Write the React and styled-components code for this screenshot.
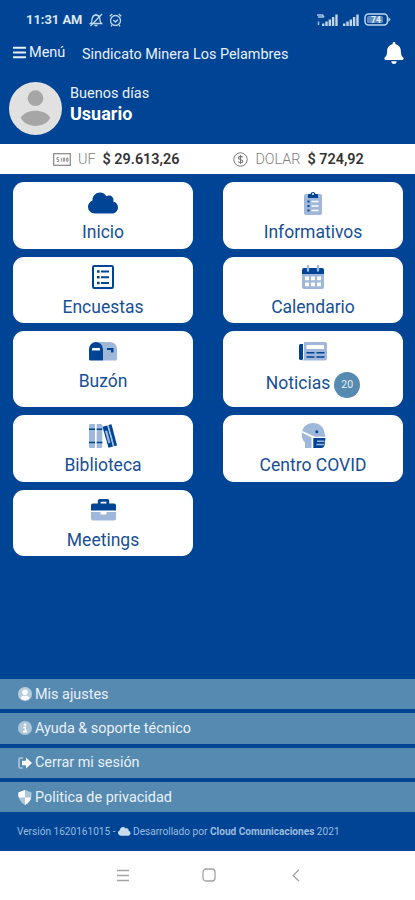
import React from "react";
import styled, { createGlobalStyle } from "styled-components";
import { FaBars, FaBell, FaCloud } from "react-icons/fa";

const blue = "#004495";
const steel = "#568ab1";
const soft = "#9fb7d9";

const GlobalStyle = createGlobalStyle`
  * {
    box-sizing: border-box;
  }
  body {
    margin: 0;
    background: ${blue};
    font-family: Roboto, sans-serif;
  }
`;

const ClipboardIcon = () => (
  <svg width="18" height="24" viewBox="0 0 18 24">
    <rect y="3" width="18" height="21" rx="2" fill={soft} />
    <path d="M4 3h2.4a2.7 2.7 0 0 1 5.2 0H14v4H4z" fill={blue} />
    <circle cx="9" cy="3" r="1" fill="#fff" />
    <path d="M7.5 10.5h7M7.5 15h7M7.5 19.5h7" stroke="#fff" strokeWidth="1.6" />
    <path d="M3.5 10.5h2M3.5 15h2M3.5 19.5h2" stroke={blue} strokeWidth="2" />
  </svg>
);

const ListIcon = () => (
  <svg width="22" height="24" viewBox="0 0 22 24">
    <rect x="1" y="1" width="20" height="22" rx="1.2" fill="none" stroke={blue} strokeWidth="2" />
    <path d="M5 6.5h2.6M5 12.3h2.6M5 18h2.6" stroke={blue} strokeWidth="2.6" />
    <path d="M9 6.5h8M9 12.3h8M9 18h8" stroke={blue} strokeWidth="1.9" />
  </svg>
);

const CalendarIcon = () => (
  <svg width="22" height="24" viewBox="0 0 22 24">
    <path d="M0 9h22v13a2 2 0 0 1-2 2H2a2 2 0 0 1-2-2z" fill={soft} />
    <path d="M0 9V5a2 2 0 0 1 2-2h18a2 2 0 0 1 2 2v4z" fill={blue} />
    <path d="M6 1v4.5M16 1v4.5" stroke={soft} strokeWidth="2.4" strokeLinecap="round" />
    <path
      d="M3 11.5h4v3.7H3zM9 11.5h4v3.7H9zM15 11.5h4v3.7h-4zM3 17.5h4v3.7H3zM9 17.5h4v3.7H9zM15 17.5h4v3.7h-4z"
      fill="#fff"
    />
  </svg>
);

const MailboxIcon = () => (
  <svg width="28" height="19" viewBox="0 0 28 19">
    <path d="M7 0h14a7 7 0 0 1 7 7v10a1.5 1.5 0 0 1-1.5 1.5H14V7a7 7 0 0 0-7-7z" fill={soft} />
    <path d="M0 7a7 7 0 0 1 14 0v11.5H1.5A1.5 1.5 0 0 1 0 17z" fill={blue} />
    <rect x="3" y="6" width="8" height="2.6" rx="0.5" fill="#fff" />
    <path d="M18 6h6.5v4.5H22V8h-4z" fill={blue} />
  </svg>
);

const NewsIcon = () => (
  <svg width="28" height="19" viewBox="0 0 28 19">
    <path d="M5 0h21.5A1.5 1.5 0 0 1 28 1.5v15a2 2 0 0 1-2 2H3.5Q5 17.500 5 16z" fill={soft} />
    <path d="M4 2H1.500A1.500 1.500 0 0 0 0 3.500v12.800a2 2 0 0 0 4 0z" fill={blue} />
    <rect x="7.500" y="3" width="17.500" height="4" fill="#fff" />
    <path d="M7.500 10.800h8M17.500 10.800h8M7.500 15h8M17.500 15h8" stroke={blue} strokeWidth="1.500" />
  </svg>
);

const BooksIcon = () => (
  <svg width="28" height="24" viewBox="0 0 28 24">
    <path d="M0 1.500Q0 0 1.200 0H6v24H1.200Q0 24 0 22.500zM7.700 0H12q1.300 0 1.300 1.500v21q0 1.500-1.300 1.500H7.700z" fill={soft} />
    <path d="M0 5.300h6M7.700 5.300h5.600M0 18.500h6M7.700 18.500h5.600" stroke={blue} strokeWidth="1.500" />
    <path d="M13.500 2.700l4.800-1.300L24 22.500l-4.500 1.300z" fill={blue} />
    <path d="M19.300 1L22.500.2 28 21.500l-3 .8z" fill={blue} />
    <path d="M16 7l2.200-.6 3.300 12.300-2.200.6z" fill={soft} />
    <path d="M18.500 1.200l1.200-.3 5.700 21.200-1.200.3z" fill={soft} />
  </svg>
);

const MaskIcon = () => (
  <svg width="25" height="25" viewBox="0 0 25 25">
    <path
      d="M12 0c7 0 11 4.500 11.500 10l1 3.800H14L1.200 8C2.500 3 6.800 0 12 0zM.8 9.500l9.700 5V25H4v-5.500C1.200 17 .3 13 .8 9.500z"
      fill={soft}
    />
    <circle cx="15.800" cy="8.800" r="1.500" fill={blue} />
    <path d="M12.300 15H24.500l-1 7.500A3 3 0 0 1 20.500 25h-8.200z" fill={blue} />
    <path d="M16 18.200h7.500M15.500 21.600h7.500" stroke={soft} strokeWidth="1.500" />
  </svg>
);

const BriefcaseIcon = () => (
  <svg width="25" height="22" viewBox="0 0 25 22">
    <path d="M0 13h9.500v2.500h6V13H25v6.500a2 2 0 0 1-2 2H2a2 2 0 0 1-2-2z" fill={soft} />
    <path
      d="M0 11.500V6.500a2 2 0 0 1 2-2h4.800V2a2 2 0 0 1 2-2h7.400a2 2 0 0 1 2 2v2.500H23a2 2 0 0 1 2 2v5zM9.600 4.500h5.800V2.700H9.600z"
      fill={blue}
      fillRule="evenodd"
    />
  </svg>
);

const MuteIcon = () => (
  <svg width="14" height="14" viewBox="0 0 14 14" fill="none" stroke="#c3d5ec" strokeWidth="1.300">
    <path d="M1.500 10.500C3.200 9 3 7 3.300 5c.5-2 2-3 3.700-3s3.200 1 3.700 3c.3 2 .1 4 1.800 5.500zM5.500 12.500h3M7 2V.8M13 1L1.500 13" />
  </svg>
);

const AlarmIcon = () => (
  <svg width="13" height="14" viewBox="0 0 13 14" fill="none" stroke="#c3d5ec" strokeWidth="1.300">
    <circle cx="6.500" cy="7.500" r="5" />
    <path d="M.7 3.300L3.300 1M12.300 3.300L9.700 1M4.300 7l2.200 2 2.500-2.500M3 12l-1 1.300M10 12l1 1.300" />
  </svg>
);

const SignalIcon = () => (
  <svg width="16" height="12" viewBox="0 0 16 12">
    <path d="M1.200 12V9.500M4.500 12V7.500M7.800 12V5.500M11.100 12V3" stroke="#c3d5ec" strokeWidth="2.400" />
    <path d="M14.500 12V.5" stroke="#c3d5ec" strokeWidth="2.400" />
  </svg>
);

const NetworkIcon = () => (
  <svg width="8" height="12" viewBox="0 0 8 12" fill="none" stroke="#a9c1e1" strokeWidth="1.500">
    <path d="M0 1h5M1 3h6M5 .5l2 2.500M1.500 7.500v3.500" />
  </svg>
);

const BatteryIcon = () => (
  <svg width="27" height="13" viewBox="0 0 27 13">
    <rect x="1" y="1" width="22.500" height="11" rx="3.500" fill="none" stroke="#c3d5ec" strokeWidth="1.500" />
    <rect x="3" y="3" width="16" height="7" rx="1.500" fill="#5f8cc2" />
    <path d="M24.500 4l2 2.500-2 2.500z" fill="#c3d5ec" />
    <text x="12" y="9.800" textAnchor="middle" fontSize="8.500" fontWeight="700" fill="#e8f0fa">
      74
    </text>
  </svg>
);

const MoneyIcon = () => (
  <svg width="18" height="13" viewBox="0 0 18 13" fill="none" stroke="#858585">
    <rect x=".7" y=".7" width="16.600" height="11.600" strokeWidth="1.200" />
    <path d="M5.500 4.500H4v2h1.500v2H3.800M8.300 5v3.500M10.300 5h1.400v3.200h-1.400zM13.700 5H15v3.200h-1.300z" strokeWidth=".9" />
  </svg>
);

const CoinIcon = () => (
  <svg width="15" height="15" viewBox="0 0 15 15" fill="none" stroke="#777">
    <circle cx="7.500" cy="7.500" r="6.700" strokeWidth="1" />
    <path d="M9.700 5.300C9 4 5.500 4 5.400 5.900c0 2 4.400 1.100 4.400 3.300 0 2-3.800 2-4.600.4M7.500 3v9" strokeWidth="1.100" />
  </svg>
);

const UserIcon = () => (
  <svg width="14" height="14" viewBox="0 0 14 14">
    <circle cx="7" cy="7" r="7" fill="#b9cfe0" />
    <circle cx="7" cy="5.200" r="2.700" fill="#fff" />
    <path d="M2.500 11.500C3 9 5 8.700 7 8.700s4 .3 4.500 2.800a6.500 6.500 0 0 1-9 0z" fill="#fff" />
  </svg>
);

const InfoIcon = () => (
  <svg width="14" height="14" viewBox="0 0 14 14">
    <circle cx="7" cy="7" r="7" fill="#adc7da" />
    <circle cx="7" cy="3.700" r="1.300" fill="#fff" />
    <path d="M5.300 6.500h2v4M5 10.700h4.200" stroke="#fff" strokeWidth="1.700" fill="none" />
  </svg>
);

const ExitIcon = () => (
  <svg width="14" height="12" viewBox="0 0 14 12">
    <path d="M5 1H2.500A1.500 1.500 0 0 0 1 2.500v7A1.500 1.500 0 0 0 2.500 11H5" stroke="#adc7da" strokeWidth="1.600" fill="none" />
    <path d="M4 3.800h4V.5L14 6l-6 5.500V8.200H4z" fill="#fff" />
  </svg>
);

const ShieldIcon = () => (
  <svg width="14" height="15" viewBox="0 0 14 15">
    <path d="M7 0l6.500 2.500C14 8 11.500 13 7 15 2.500 13 0 8 .5 2.500z" fill="#adc7da" />
    <path d="M7 0v7.500H.7C.3 5.500.4 4 .5 2.500zM7 7.500h6.200C12.200 11 10 13.700 7 15z" fill="#fff" />
  </svg>
);

const NAV_ITEMS = [
  { label: "Inicio", icon: <FaCloud size={30} color={blue} /> },
  { label: "Informativos", icon: <ClipboardIcon /> },
  { label: "Encuestas", icon: <ListIcon /> },
  { label: "Calendario", icon: <CalendarIcon /> },
  { label: "Buzón", icon: <MailboxIcon /> },
  { label: "Noticias", icon: <NewsIcon />, badge: 20 },
  { label: "Biblioteca", icon: <BooksIcon /> },
  { label: "Centro COVID", icon: <MaskIcon /> },
  { label: "Meetings", icon: <BriefcaseIcon /> },
];

const OPTIONS = [
  { label: "Mis ajustes", icon: <UserIcon /> },
  { label: "Ayuda & soporte técnico", icon: <InfoIcon /> },
  { label: "Cerrar mi sesión", icon: <ExitIcon /> },
  { label: "Politica de privacidad", icon: <ShieldIcon /> },
];

const App = () => {
  return (
    <>
      <GlobalStyle />
      <Screen>
        <StatusBar>
          <Clock>11:31 AM</Clock>
          <MuteIcon />
          <AlarmIcon />
          <StatusRight>
            <NetworkIcon />
            <SignalIcon />
            <SignalIcon />
            <BatteryIcon />
          </StatusRight>
        </StatusBar>
        <Header>
          <MenuButton>
            <FaBars size={15} />
            Menú
          </MenuButton>
          <Title>Sindicato Minera Los Pelambres</Title>
          <BellIcon />
        </Header>
        <Profile>
          <Avatar viewBox="0 0 54 54">
            <circle cx="27" cy="27" r="27" fill="#e1e1e1" />
            <circle cx="27" cy="16.500" r="8" fill="#a6a6a6" />
            <path d="M12 36.500C17 27 37 27 42 36.500 37 47.500 17 47.500 12 36.500z" fill="#a6a6a6" />
          </Avatar>
          <div>
            <Greeting>Buenos días</Greeting>
            <UserName>Usuario</UserName>
          </div>
        </Profile>
        <Ticker>
          <Rate>
            <MoneyIcon />
            <span>UF</span>
            <b>$ 29.613,26</b>
          </Rate>
          <Rate>
            <CoinIcon />
            <span>DOLAR</span>
            <b>$ 724,92</b>
          </Rate>
        </Ticker>
        <CardGrid>
          {NAV_ITEMS.map(({ label, icon, badge }) => (
            <Card key={label}>
              <CardIcon>{icon}</CardIcon>
              <CardLabel $tall={Boolean(badge)}>
                {label}
                {badge && <Badge>{badge}</Badge>}
              </CardLabel>
            </Card>
          ))}
        </CardGrid>
        <Options>
          {OPTIONS.map(({ label, icon }) => (
            <Option key={label}>
              <OptionIcon>{icon}</OptionIcon>
              {label}
            </Option>
          ))}
        </Options>
        <Version>
          Versión 1620161015 - <FaCloud size={12.5} /> Desarrollado por{" "}
          <b>Cloud Comunicaciones</b> 2021
        </Version>
        <SystemNav>
          <svg width="12" height="13" viewBox="0 0 12 13">
            <path d="M0 1.500h12M0 6.500h12M0 11.500h12" />
          </svg>
          <svg width="14" height="14" viewBox="0 0 14 14">
            <rect x="1" y="1" width="12" height="12" rx="3" />
          </svg>
          <svg width="8" height="13" viewBox="0 0 8 13">
            <path d="M7 .7L1.200 6.500 7 12.300" />
          </svg>
        </SystemNav>
      </Screen>
    </>
  );
};

const Screen = styled.div`
  display: flex;
  flex-direction: column;
  width: 415px;
  height: 900px;
  overflow: hidden;
  color: #e9f1fa;
  background: ${blue};

  svg {
    flex-shrink: 0;
  }
`;

const StatusBar = styled.div`
  display: flex;
  align-items: center;
  gap: 6px;
  height: 39px;
  padding: 0 24px 0 26px;
`;

const Clock = styled.span`
  margin-right: 1px;
  font-size: 12.9px;
  font-weight: 700;
  color: #d9e6f5;
`;

const StatusRight = styled.div`
  display: flex;
  align-items: center;
  gap: 5px;
  margin-left: auto;

  svg:first-child {
    margin-right: -8px;
  }
`;

const Header = styled.header`
  display: flex;
  align-items: center;
  height: 29px;
  padding: 0 11px 2px 12px;
`;

const MenuButton = styled.div`
  display: flex;
  align-items: center;
  gap: 2px;
  width: 70px;
  font-size: 14.5px;
`;

const Title = styled.div`
  flex: 1;
  padding-top: 4px;
  font-size: 14.4px;
`;

const BellIcon = styled(FaBell)`
  width: 20px;
  height: 22px;
  color: #fff;
`;

const Profile = styled.div`
  display: flex;
  gap: 8px;
  height: 76px;
  padding: 14px 9px 0;
`;

const Avatar = styled.svg`
  width: 53px;
  height: 53px;
`;

const Greeting = styled.div`
  margin-top: 2px;
  font-size: 14.5px;
  line-height: 20px;
`;

const UserName = styled.div`
  font-size: 18px;
  font-weight: 700;
  line-height: 19px;
  color: #fff;
`;

const Ticker = styled.div`
  display: flex;
  gap: 54px;
  height: 30px;
  padding-left: 53px;
  background: #fff;
`;

const Rate = styled.div`
  display: flex;
  align-items: center;
  gap: 7px;
  font-size: 14.4px;
  color: #808080;

  span {
    font-weight: 300;
  }

  b {
    font-weight: 600;
    color: #333;
  }
`;

const CardGrid = styled.nav`
  display: grid;
  grid-template-columns: 180px 180px;
  grid-auto-rows: minmax(66.6px, auto);
  align-content: start;
  gap: 8px 30px;
  height: 504px;
  padding: 8px 13px 0;
`;

const Card = styled.div`
  display: flex;
  flex-direction: column;
  align-items: center;
  padding: 8px 0 3px;
  border-radius: 11px;
  background: #fff;
`;

const CardIcon = styled.div`
  display: flex;
  align-items: center;
  justify-content: center;
  height: 25px;
`;

const CardLabel = styled.div`
  display: flex;
  gap: 4px;
  height: ${(props) => (props.$tall ? "34px" : "24px")};
  margin-top: ${(props) => (props.$tall ? "6px" : "5px")};
  font-size: 17.5px;
  line-height: ${(props) => (props.$tall ? "27px" : "24px")};
  color: #174f94;
`;

const Badge = styled.span`
  width: 26px;
  height: 26px;
  margin-top: 2px;
  border-radius: 50%;
  font-size: 10.5px;
  line-height: 26px;
  text-align: center;
  color: #e6eff6;
  background: ${steel};
`;

const Options = styled.div`
  display: flex;
  flex-direction: column;
  gap: 4px;
  padding-top: 1px;
`;

const Option = styled.div`
  display: flex;
  align-items: center;
  gap: 3px;
  height: 30.3px;
  padding-left: 18px;
  font-size: 14.4px;
  background: ${steel};
`;

const OptionIcon = styled.span`
  display: flex;
  width: 14px;
`;

const Version = styled.div`
  flex: 1;
  padding: 12px 0 0 17px;
  font-size: 10.1px;
  line-height: 16px;
  color: #9dbbdf;
  white-space: nowrap;

  svg {
    vertical-align: -2px;
    color: #c9daee;
  }
`;

const SystemNav = styled.div`
  display: flex;
  align-items: center;
  justify-content: center;
  gap: 74px;
  height: 49px;
  padding: 0 0 1px 1px;
  background: #fff;

  svg {
    fill: none;
    stroke: #a3a3a3;
    stroke-width: 1.3;
  }

  svg:nth-child(2) {
    margin: 0 2px 0 -1px;
  }
`;

export default App;
